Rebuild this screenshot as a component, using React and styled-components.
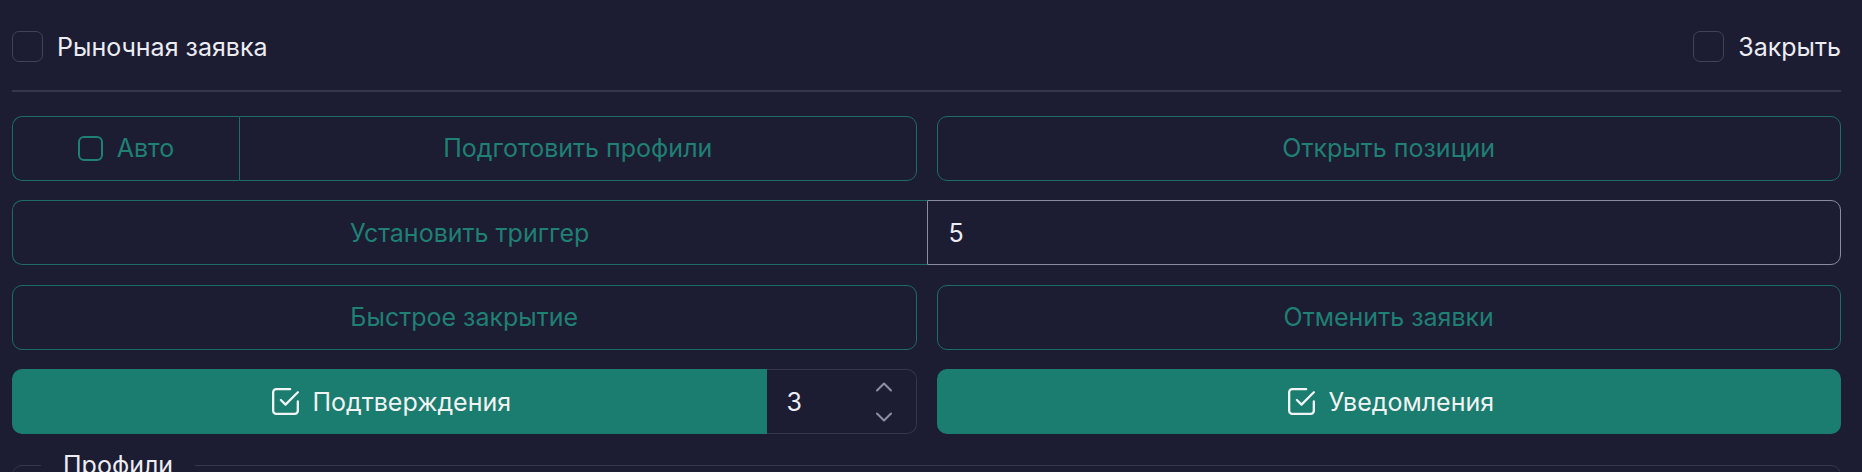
import React from "react";
import styled, { createGlobalStyle } from "styled-components";
import { ChevronUp, ChevronDown } from "lucide-react";

const GlobalStyle = createGlobalStyle`
  html, body {
    margin: 0;
    background: #1c1c32;
  }
  body {
    font-family: Inter, "Noto Sans", sans-serif;
    color: #ececf2;
  }
  * {
    box-sizing: border-box;
  }
`;

const teal = "#1f8074";
const tealBorder = "#1d6c65";
const tealFill = "#1b7c70";

const CheckIcon = () => (
  <svg width="37" height="37" viewBox="0 0 24 24" fill="none" stroke="currentColor" strokeWidth="1.5" strokeLinecap="round" strokeLinejoin="round">
    <path d="M9 11l3 3l8 -8" />
    <path d="M20 12v6a2 2 0 0 1 -2 2h-12a2 2 0 0 1 -2 -2v-12a2 2 0 0 1 2 -2h9" />
  </svg>
);

const App = () => {
  return (
    <Page>
      <GlobalStyle />
      <TopBar>
        <CheckLabel>
          <Box />
          Рыночная заявка
        </CheckLabel>
        <CheckLabel>
          <Box />
          Закрыть
        </CheckLabel>
      </TopBar>
      <Divider />
      <Grid>
        <Group>
          <AutoToggle>
            <SmallBox />
            Авто
          </AutoToggle>
          <OutlineButton $left="none" $radius="0 10px 10px 0">
            Подготовить профили
          </OutlineButton>
        </Group>
        <OutlineButton>Открыть позиции</OutlineButton>

        <Wide>
          <OutlineButton $half $radius="10px 0 0 10px" $right="none">
            Установить триггер
          </OutlineButton>
          <TextInput defaultValue="5" />
        </Wide>

        <OutlineButton>Быстрое закрытие</OutlineButton>
        <OutlineButton>Отменить заявки</OutlineButton>

        <Group>
          <FilledButton $radius="10px 0 0 10px">
            <CheckIcon />
            Подтверждения
          </FilledButton>
          <NumberField>
            <NumberValue>3</NumberValue>
            <Stepper>
              <ChevronUp size={28} strokeWidth={1.8} />
              <ChevronDown size={28} strokeWidth={1.8} />
            </Stepper>
          </NumberField>
        </Group>
        <FilledButton>
          <CheckIcon />
          Уведомления
        </FilledButton>
      </Grid>
      <Profiles>
        <Legend>Профили</Legend>
      </Profiles>
    </Page>
  );
};

export default App;

const Page = styled.div`
  padding: 0 21px 40px 12px;
  font-size: 25px;
`;

const TopBar = styled.div`
  display: flex;
  justify-content: space-between;
  align-items: center;
  padding-top: 31px;
  height: 62px;
`;

const CheckLabel = styled.label`
  display: flex;
  align-items: center;
  gap: 14px;
  font-size: 25px;
  color: #ececf2;
`;

const Box = styled.span`
  display: block;
  width: 31px;
  height: 31px;
  border: 1.5px solid #41415a;
  border-radius: 7px;
`;

const Divider = styled.div`
  height: 1.5px;
  margin-top: 28px;
  background: #35354b;
`;

const Grid = styled.div`
  display: grid;
  grid-template-columns: 1fr 1fr;
  grid-auto-rows: 65px;
  column-gap: 20px;
  row-gap: 19.5px;
  margin-top: 24px;
`;

const Group = styled.div`
  display: flex;
  min-width: 0;
`;

const Wide = styled.div`
  grid-column: 1 / -1;
  display: flex;
`;

const OutlineButton = styled.button`
  flex: ${(p) => (p.$half ? "0 0 50%" : "1 1 0")};
  min-width: 0;
  height: 100%;
  display: flex;
  align-items: center;
  justify-content: center;
  background: transparent;
  border: 1.5px solid ${tealBorder};
  border-left: ${(p) => (p.$left === "none" ? `1px solid ${tealBorder}` : `1.5px solid ${tealBorder}`)};
  border-right: ${(p) => (p.$right === "none" ? "none" : `1.5px solid ${tealBorder}`)};
  border-radius: ${(p) => p.$radius || "10px"};
  color: ${teal};
  font-family: Inter, "Noto Sans", sans-serif;
  font-size: 25px;
  cursor: pointer;
`;

const AutoToggle = styled.div`
  width: 227px;
  flex: none;
  display: flex;
  align-items: center;
  justify-content: center;
  gap: 14px;
  border: 1.5px solid ${tealBorder};
  border-right: none;
  border-radius: 10px 0 0 10px;
  color: ${teal};
`;

const SmallBox = styled.span`
  display: block;
  width: 25px;
  height: 25px;
  border: 2.5px solid ${teal};
  border-radius: 6px;
`;

const TextInput = styled.input`
  flex: 0 0 50%;
  min-width: 0;
  height: 100%;
  padding: 0 21px;
  background: transparent;
  border: 1.5px solid #8a8aa2;
  border-radius: 0 10px 10px 0;
  color: #ececf2;
  font-family: Inter, "Noto Sans", sans-serif;
  font-size: 25px;
  outline: none;
`;

const FilledButton = styled.button`
  flex: 1 1 0;
  min-width: 0;
  height: 100%;
  display: flex;
  align-items: center;
  justify-content: center;
  gap: 8px;
  background: ${tealFill};
  border: none;
  border-radius: ${(p) => p.$radius || "10px"};
  color: #f2f4f4;
  font-family: Inter, "Noto Sans", sans-serif;
  font-size: 25px;
  cursor: pointer;
`;

const NumberField = styled.div`
  width: 150px;
  flex: none;
  display: flex;
  align-items: center;
  justify-content: space-between;
  padding: 0 18px 0 20px;
  border: 1.5px solid #35354b;
  border-left: none;
  border-radius: 0 10px 10px 0;
`;

const NumberValue = styled.span`
  color: #ececf2;
  font-size: 25px;
`;

const Stepper = styled.div`
  display: flex;
  flex-direction: column;
  gap: 2px;
  color: #8e8ea2;
`;

const Profiles = styled.fieldset`
  margin: 16px 0 0;
  padding: 0 16px;
  min-height: 120px;
  border: 1.5px solid #35354b;
  border-radius: 10px;
`;

const Legend = styled.legend`
  margin-left: 12px;
  padding: 0 22px;
  font-size: 25px;
  color: #ececf2;
`;
